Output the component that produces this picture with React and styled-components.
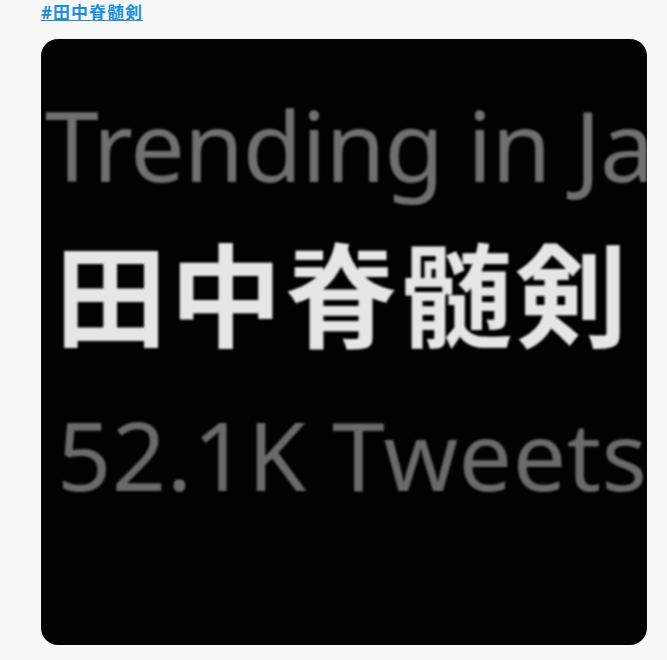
import React from "react";
import styled, { createGlobalStyle } from "styled-components";

const Global = createGlobalStyle`
  html, body { margin: 0; padding: 0; background: #f7f7f7; }
  body { font-family: "Noto Sans", "Noto Sans CJK JP", sans-serif; }
`;

const Page = styled.div`
  width: 667px;
  height: 660px;
  padding: 2px 0 0 41px;
  box-sizing: border-box;
  display: flex;
  flex-direction: column;
  gap: 15px;
`;

const HashLink = styled.a`
  font-family: "Noto Sans", "Noto Sans CJK JP", sans-serif;
  font-weight: 700;
  font-size: 17px;
  letter-spacing: 1px;
  line-height: 22px;
  color: #1d8fe0;
  text-decoration: underline;
  align-self: flex-start;
`;

const Shot = styled.div`
  width: 606px;
  height: 606px;
  background: #020202;
  border-radius: 17px;
  overflow: hidden;
  display: flex;
  flex-direction: column;
`;

const Blur = styled.div`
  filter: blur(1.1px);
  display: flex;
  flex-direction: column;
  white-space: nowrap;
`;

const Line = styled.div`
  font-family: ${(p) => p.$cjk ? '"Noto Sans CJK JP", sans-serif' : '"Noto Sans", sans-serif'};
  font-weight: ${(p) => (p.$bold ? 700 : 400)};
  font-size: ${(p) => p.$size}px;
  line-height: ${(p) => p.$lh}px;
  color: ${(p) => p.$color};
  margin-left: ${(p) => p.$left}px;
  margin-top: ${(p) => p.$top || 0}px;
  letter-spacing: ${(p) => p.$ls || 0}px;
`;

export default function App() {
  return (
    <>
      <Global />
      <Page>
        <HashLink href="#">#田中脊髄剣</HashLink>
        <Shot>
          <Blur>
            <Line $size={97} $lh={150} $color="#707070" $left={4} $ls={-1} $top={30}>
              Trending in Ja
            </Line>
            <Line $cjk $bold $size={112} $lh={140} $color="#e6e6e6" $left={14} $ls={3} $top={1}>
              田中脊髄剣
            </Line>
            <Line $size={95} $lh={150} $color="#6a6a6a" $left={16} $ls={0.5} $top={19}>
              52.1K Tweets
            </Line>
          </Blur>
        </Shot>
      </Page>
    </>
  );
}
